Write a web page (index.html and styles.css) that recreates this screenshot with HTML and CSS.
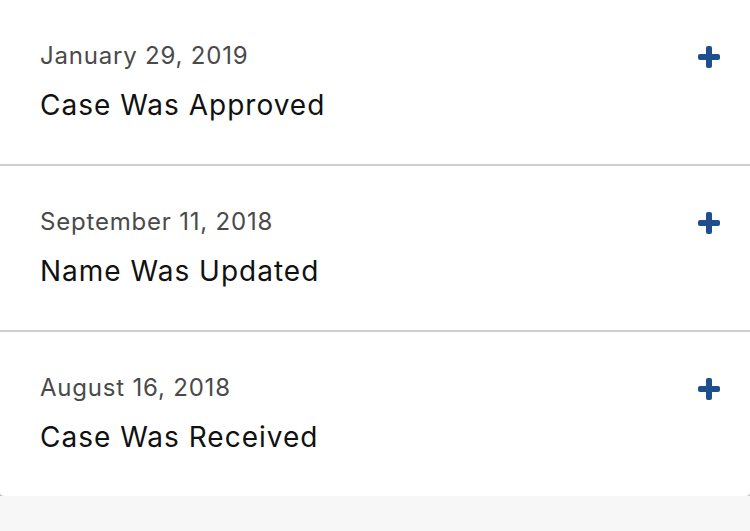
FILE: index.html
```html
<!DOCTYPE html>
<html lang="en">
<head>
    <meta charset="UTF-8">
    <meta name="viewport" content="width=device-width, initial-scale=1.0">
    <title>Case History</title>
    <link rel="stylesheet" href="styles.css">
</head>
<body>
    <div class="history">
        <div class="event">
            <div class="eventText">
                <div class="eventDate">January 29, 2019</div>
                <div class="eventTitle">Case Was Approved</div>
            </div>
            <span class="plus"></span>
        </div>
        <div class="event">
            <div class="eventText">
                <div class="eventDate">September 11, 2018</div>
                <div class="eventTitle">Name Was Updated</div>
            </div>
            <span class="plus"></span>
        </div>
        <div class="event">
            <div class="eventText">
                <div class="eventDate">August 16, 2018</div>
                <div class="eventTitle">Case Was Received</div>
            </div>
            <span class="plus"></span>
        </div>
    </div>
</body>
</html>
```

FILE: styles.css
```css
* {
    font-family: Inter, "Open Sans", sans-serif;
    box-sizing: border-box;
}

body {
    margin: 0;
    background-color: #f7f7f7;
}

.history {
    background-color: #ffffff;
    border-radius: 0 0 4px 4px;
    box-shadow: 0 3px 4px rgba(0, 0, 0, 0.4);
}

.event {
    display: flex;
    justify-content: space-between;
    align-items: flex-start;
    height: 166px;
    padding: 41px 30px 0 40px;
    border-bottom: 2px solid #cfcfcf;
}

.event:last-child {
    border-bottom: none;
    height: 164px;
}

.eventDate {
    font-size: 24px;
    line-height: 30px;
    letter-spacing: 0.8px;
    color: #4a4a4a;
}

.eventTitle {
    margin-top: 17px;
    font-size: 28px;
    line-height: 34px;
    letter-spacing: 1px;
    color: #111111;
}

.plus {
    position: relative;
    width: 22px;
    height: 22px;
    margin-top: 5px;
}

.plus::before,
.plus::after {
    content: "";
    position: absolute;
    background-color: #1f4e8c;
    border-radius: 2px;
}

.plus::before {
    left: 0;
    top: 8px;
    width: 22px;
    height: 6px;
}

.plus::after {
    left: 8px;
    top: 0;
    width: 6px;
    height: 22px;
}
```
